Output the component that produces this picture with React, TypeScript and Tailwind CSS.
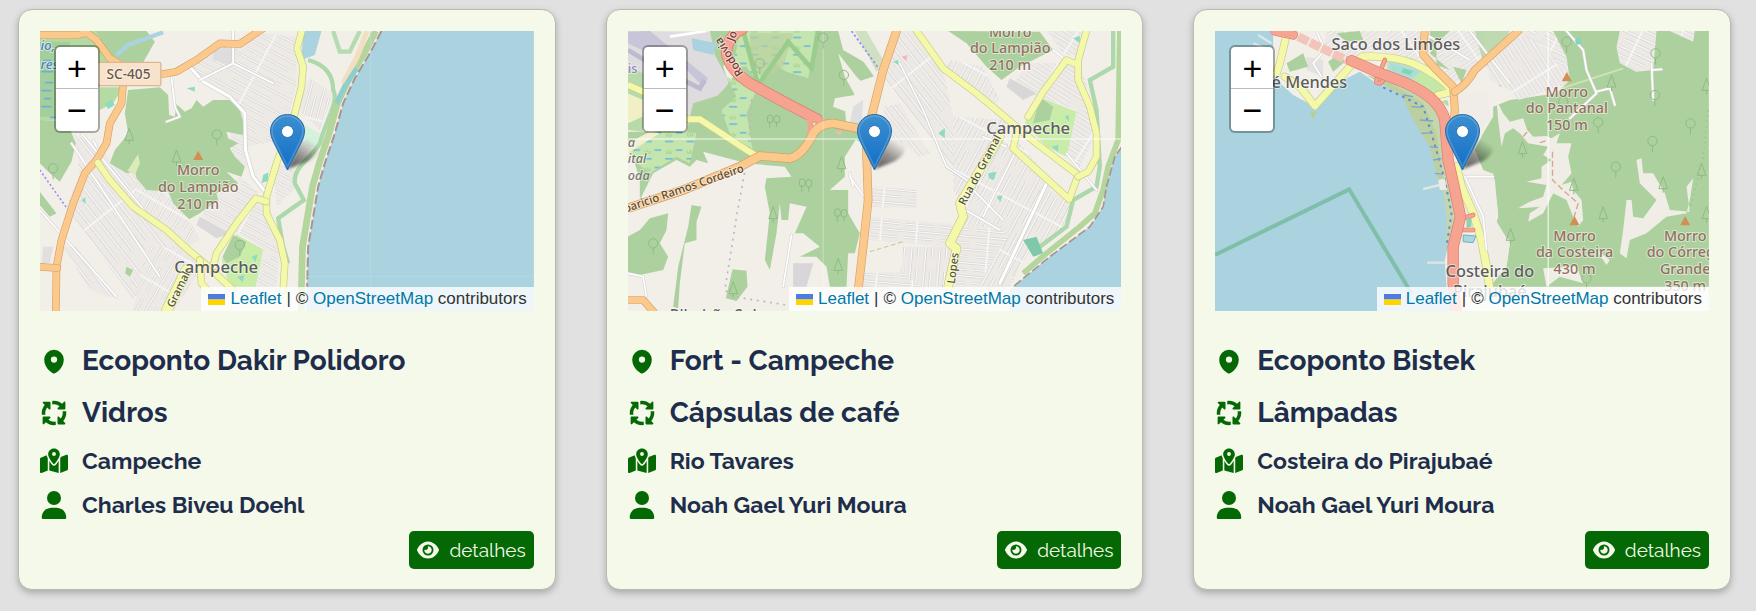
import type { ReactNode } from "react";
import { FaArrowsSpin, FaEye, FaMapLocationDot, FaUser } from "react-icons/fa6";
import { HiMiniMapPin } from "react-icons/hi2";

const LAND = "#f2efe9";
const SEA = "#aad3df";
const FOREST = "#add19e";
const PARK = "#c9eda9";

const ROADS = {
  primary: { fill: "#fcc98d", edge: "#d9a265", width: 19 },
  secondary: { fill: "#f4f9a9", edge: "#c9ca86", width: 18 },
  trunk: { fill: "#f6a392", edge: "#dd7c6c", width: 26 },
  street: { fill: "#ffffff", edge: "#d0cfcd", width: 9 },
  lane: { fill: "#ffffff", edge: "#d8d6d4", width: 5 },
};

function Road({ kind, d, width }: { kind: keyof typeof ROADS; d: string; width?: number }) {
  const road = ROADS[kind];
  const w = width ?? road.width;
  return (
    <g fill="none" strokeLinejoin="round" strokeLinecap="round">
      <path d={d} stroke={road.edge} strokeWidth={w + 4} />
      <path d={d} stroke={road.fill} strokeWidth={w} />
    </g>
  );
}

function Streets({ id, angle, gap = 17, block = 62 }: { id: string; angle: number; gap?: number; block?: number }) {
  const b = block * 2;
  const g = gap * 2;
  return (
    <pattern id={id} width={b} height={g} patternUnits="userSpaceOnUse" patternTransform={`rotate(${angle})`}>
      <rect width={b} height={g} fill="#edeae6" />
      <path d={`M0 ${gap / 2}H${b}M0 ${gap * 1.5}H${b * 0.8}`} stroke="#d3d1d0" strokeWidth="9" />
      <path d={`M0 ${gap / 2}H${b}M0 ${gap * 1.5}H${b * 0.8}M${b / 3} 0V${g}`} stroke="#fbfafa" strokeWidth="4" />
    </pattern>
  );
}

function Marsh({ id }: { id: string }) {
  return (
    <pattern id={id} width="64" height="52" patternUnits="userSpaceOnUse">
      <rect width="64" height="52" fill="#c4e6ae" />
      <path d="M4 8h24M36 34h20" stroke="#74b9dc" strokeWidth="5" />
      <path d="M10 46l-4-9M15 46v-13M20 46l4-9" stroke="#9fce8e" strokeWidth="3" />
    </pattern>
  );
}

function Label({ x, y, size = 44, color = "#5d5d5d", rotate = 0, anchor = "middle", lines, gap = 50, weight = 500 }: {
  x: number; y: number; size?: number; color?: string; rotate?: number;
  anchor?: "start" | "middle" | "end"; lines: string[]; gap?: number; weight?: number;
}) {
  return (
    <text
      fontFamily='"Noto Sans", sans-serif' fontSize={size} fontWeight={weight} fill={color} textAnchor={anchor}
      stroke="#ffffff" strokeOpacity="0.5" strokeWidth="6" paintOrder="stroke" strokeLinejoin="round"
      transform={`translate(${x} ${y}) rotate(${rotate})`}
    >
      {lines.map((line, i) => (
        <tspan key={line} x="0" y={i * gap}>{line}</tspan>
      ))}
    </text>
  );
}

function Peak({ x, y, lines }: { x: number; y: number; lines: string[] }) {
  return (
    <g>
      <path d={`M${x} ${y - 14}l15 28h-30z`} fill="#d08f55" />
      <Label x={x} y={y + 60} size={43} color="#93705f" lines={lines} />
    </g>
  );
}

function Trees({ points }: { points: [number, number][] }) {
  return (
    <g fill="none" stroke="#8fbb83" strokeWidth="3">
      {points.map(([x, y], i) =>
        i % 2 ? (
          <path key={x + "-" + y} d={`M${x} ${y - 20}l-13 36h26zM${x} ${y + 16}v12`} />
        ) : (
          <path key={x + "-" + y} d={`M${x} ${y + 28}v-18M${x - 14} ${y - 5}a14 14 0 1 0 28 0a14 14 0 1 0-28 0`} />
        ),
      )}
    </g>
  );
}

function MapSvg({ viewBox, title, children }: { viewBox: string; title: string; children: ReactNode }) {
  return (
    <svg viewBox={viewBox} preserveAspectRatio="xMidYMid slice" role="img" aria-label={title} className="block h-full w-full">
      {children}
    </svg>
  );
}

function MapDakir() {
  return (
    <MapSvg viewBox="120 93 1482 840" title="Ecoponto Dakir Polidoro">
      <defs>
        <Streets id="a1" angle={52} gap={27} block={150} />
        <Streets id="a2" angle={-60} gap={26} block={54} />
        <Streets id="a3" angle={28} gap={26} block={90} />
        <Streets id="a4" angle={-75} gap={20} block={76} />
        <Marsh id="am" />
      </defs>
      <rect x="120" y="93" width="1482" height="840" fill={LAND} />
      <path d="M225 400L420 540L560 740L480 770L400 900L200 620L240 520Z" fill="url(#a1)" />
      <path d="M440 740L560 745L610 800L520 933H400Z" fill="url(#a2)" />
      <path d="M190 740L230 740L350 890L320 890L270 870Z" fill="url(#a1)" />
      <path d="M130 740L160 740L150 790L125 790Z" fill="#e2e0de" />
      <path d="M410 530L520 600L570 658L600 720L560 745L400 620Z" fill="url(#a2)" />
      <path d="M560 190L640 130L800 100L890 110L890 250L850 420L740 440L735 340L640 260Z" fill="url(#a3)" />
      <path d="M690 395L740 400L740 500L700 480Z" fill="url(#a3)" />
      <path d="M640 580L720 530L800 600L740 640L690 700L600 660Z" fill="url(#a3)" />
      <path d="M720 640L790 610L800 660L840 740L830 860L770 860L790 745L700 690Z" fill="url(#a3)" />
      <path d="M820 480L890 520L880 570L830 620Z" fill="url(#a3)" />
      <path d="M890 320L930 235L1000 280L960 390Z" fill="url(#a4)" />
      <path d="M600 650L690 700L650 715L590 675Z" fill="#dad8d8" />
      <path d="M640 145L710 145L690 195L640 180Z" fill="#dedcdc" />
      <path d="M120 360L200 362L228 430L215 485L180 545L150 520L120 490Z" fill={FOREST} />
      <path d="M285 93H440L465 125L420 205L370 240L340 180Z" fill={FOREST} />
      <path d="M300 262H370L340 310L300 330Z" fill="#b5dba2" />
      <path d="M120 93H290L330 170V190H290V340L165 360H120Z" fill="#b4d9a2" />
      <path d="M120 125H210V350H120Z" fill="#a4cf9a" />
      <path d="M125 215h35M135 248h25M125 272h30M132 296h22M125 320h30M150 352h20M130 182h25" stroke="#6bb0dd" strokeWidth="5" />
      <path d="M350 165L385 135L490 97" fill="none" stroke={SEA} strokeWidth="13" />
      <path d="M120 575L170 640L150 650L120 615Z" fill={FOREST} />
      <path d="M385 270L480 262L505 285L508 345L525 350L530 312L555 335L575 325L590 300L610 320L640 300L690 300L720 330L735 380L728 405L680 395L685 415L715 430L690 445L705 470L735 500L725 530L680 515L715 550L650 580L655 600L600 640L568 658L520 610L505 575L440 570L410 535L405 515L380 520L330 490L345 450L370 420L385 400L375 340Z" fill={FOREST} />
      <path d="M415 462L420 490L405 525L383 512Z" fill="#dcebb9" />
      <path d="M708 703L790 748L768 860H690L665 780Z" fill={PARK} />
      <path d="M700 705L740 725L720 770L680 790L668 770Z" fill={FOREST} />
      <path d="M315 310l20-10 10 15-20 12zM560 265l25-5v15zM790 525l15-8v25l-20 8zM755 770l18-6-6 22zM712 830l22-5-6 22zM245 600l12-8v20z" fill="#8edcc0" />
      <path d="M380 800l20 10-10 20-14-10z" fill={FOREST} />
      <path d="M910 93H965L945 165L905 180Z" fill={SEA} />
      <path d="M905 370L960 400L950 440L920 440Z" fill="#d6f1dd" />
      <path d="M925 180C980 195 1000 230 1000 270C1020 300 975 370 960 430C930 480 880 500 885 550L912 600L835 655L850 740L865 790" fill="none" stroke="#add8ac" strokeWidth="13" />
      <path d="M1000 93L1020 155L1050 155L1080 93" fill="none" stroke="#b4dcb1" strokeWidth="13" />
      <path d="M1145 93L1110 160L1065 235L1030 310L1005 400L975 490L955 560L940 650L925 740L922 860L918 933H1602V93Z" fill={SEA} />
      <path d="M1128 93L1093 160L1048 235L1013 310L988 400L958 490L938 560L923 650L908 740L905 860V933" fill="none" stroke="#b4d69c" strokeWidth="20" />
      <path d="M1102 93L1072 170L1030 250" fill="none" stroke="#f2dec0" strokeWidth="16" />
      <path d="M1010 310L1035 260L1070 205" fill="none" stroke="#8fcfcb" strokeWidth="15" />
      <path d="M1145 93L1110 160L1065 235L1030 310L1005 400L975 490L955 560L940 650L925 740L922 860" fill="none" stroke="#a9948f" strokeWidth="6" strokeDasharray="28 10" />
      <path d="M1112 93V860M918 830H1602" stroke="#b9dbe3" strokeWidth="2" />
      <path d="M120 510L205 630" stroke="#9292ee" strokeWidth="5" strokeDasharray="6 7" fill="none" />
      <Road kind="lane" d="M515 232L525 320L540 350L500 365" />
      <Road kind="lane" d="M120 630L350 890M215 430L480 830M245 400L440 640M280 420L290 440" />
      <Road kind="street" d="M570 200L610 245L690 290L735 340L737 450L760 530L800 580" />
      <Road kind="street" d="M600 240L700 190L820 250M700 190V93" width={6} />
      <Road kind="primary" d="M110 105H235L260 98L290 120L330 175L365 195L370 250L365 310L330 370L320 430L290 480L255 520L220 610L185 720L170 800L168 940" />
      <Road kind="primary" d="M110 800L172 804" />
      <Road kind="primary" d="M485 223L530 215L590 180L660 130L720 132L790 85" />
      <Road kind="secondary" d="M294 488L330 540L400 620L500 690L560 745L620 795L700 870" />
      <Road kind="secondary" d="M908 85L892 145L910 200L905 260L885 340L830 490L800 590L800 640L840 720L855 790L850 870" />
      <Road kind="secondary" d="M800 605L768 595L710 670L650 760L640 800M600 780L605 850L640 890" />
      <Road kind="secondary" d="M560 810L500 933" width={30} />
      <rect x="290" y="187" width="193" height="70" rx="4" fill="#f8e2cc" stroke="#dcb793" strokeWidth="4" />
      <Label x={386} y={237} size={41} color="#6b5747" lines={["SC-405"]} />
      <g fontStyle="italic">
        <Label x={122} y={150} size={40} color="#4a83bd" lines={["io,", "res"]} gap={58} anchor="start" />
      </g>
      <Trees points={[[651, 408], [530, 470], [160, 510], [388, 405], [720, 740]]} />
      <Peak x={595} y={466} lines={["Morro", "do Lampião", "210 m"]} />
      <Label x={649} y={820} size={50} lines={["Campeche"]} />
      <Label x={520} y={925} size={33} rotate={-64} anchor="start" color="#55553a" lines={["Gramal"]} />
    </MapSvg>
  );
}

function MapFort() {
  return (
    <MapSvg viewBox="84 93 1482 840" title="Fort - Campeche">
      <defs>
        <Streets id="b1" angle={52} gap={27} block={160} />
        <Streets id="b2" angle={-62} gap={25} block={74} />
        <Streets id="b3" angle={5} gap={20} block={54} />
        <Streets id="b4" angle={32} gap={24} block={100} />
        <Streets id="b5" angle={95} gap={21} block={90} />
        <Marsh id="bm" />
      </defs>
      <rect x="84" y="93" width="1482" height="840" fill={LAND} />
      <path d="M900 93H950L1030 210L1060 350L1100 500L1060 500L840 220Z" fill="url(#b1)" />
      <path d="M850 320L900 310L990 460L960 470L860 400Z" fill="url(#b1)" />
      <path d="M1060 350L1220 360L1190 480L1090 620L1060 570Z" fill="url(#b2)" />
      <path d="M1190 420L1260 430L1360 550L1230 780L1080 680Z" fill="url(#b2)" />
      <path d="M1050 180L1150 200L1200 300L1170 320L1030 210Z" fill="url(#b2)" />
      <path d="M1290 190L1380 190L1430 180L1460 250L1480 420L1440 500L1400 460L1430 330L1230 260Z" fill="url(#b4)" />
      <path d="M1340 93H1450L1430 170L1390 160Z" fill="url(#b4)" />
      <path d="M1230 235L1310 280L1270 300L1220 260Z" fill="#d8d6d6" />
      <path d="M800 560L950 570V625L800 620Z" fill="url(#b3)" />
      <path d="M810 650L1160 680L1300 720L1230 860H1050L1060 740L810 720Z" fill="url(#b3)" />
      <path d="M910 740L1060 740L1045 933H960L900 860Z" fill="url(#b5)" />
      <path d="M790 820L910 815L960 860V933H780Z" fill="url(#b3)" />
      <path d="M1320 560L1420 600L1390 700L1300 740L1220 860L1130 860Z" fill="url(#b2)" />
      <path d="M1070 860H1230L1160 933H1040Z" fill="url(#b4)" />
      <path d="M84 93L330 95L400 280L250 360L84 250Z" fill="#dedcdf" />
      <path d="M330 93H420L370 200L400 290L330 310L390 250L345 165Z" fill={FOREST} />
      <path d="M84 200L130 220V395L84 390Z" fill="#b7daa8" />
      <path d="M84 280L130 300L128 350L84 370Z" fill="#f1efc6" />
      <path d="M84 95L150 93L325 235L305 255L260 210L84 130Z" fill="#c9c5d8" />
      <path d="M84 150L150 190L300 265L315 240" fill="none" stroke="#bebad0" strokeWidth="14" />
      <path d="M275 115L350 130L340 165L280 150Z" fill={SEA} />
      <path d="M210 110L320 93" stroke="#fff" strokeWidth="8" />
      <path d="M380 93H715L730 150L850 220L760 250L765 300L735 320L740 380L780 400L735 470L735 530L690 570L745 570L745 640L780 700L765 760L745 760L740 860H690L680 800L650 770L600 770L660 740L610 700L585 700L620 620L570 610L565 660L545 660L540 610L530 700L510 810L495 780L510 640L495 560L500 535L575 530L555 500L440 490L310 455L325 490L290 480L270 500L230 480L160 520L120 600V540L84 420V395H260L280 310L360 285L400 230Z" fill={FOREST} />
      <path d="M420 93H650L625 235L560 215L520 190L475 250L440 200L400 200Z" fill="url(#bm)" />
      <path d="M450 100H580L550 200L490 240L450 180Z" fill="#b9ce9f" opacity="0.7" />
      <path d="M430 93L475 255L565 125L635 205L655 93" fill="none" stroke="#99cc8d" strokeWidth="14" />
      <path d="M380 230L470 270L440 340L460 460L400 430L365 330L410 290Z" fill="url(#bm)" />
      <path d="M84 450L180 390L290 400L270 490L230 470L150 520L100 480Z" fill="url(#bm)" />
      <path d="M84 430L150 395L180 400L84 460Z" fill="#f2efd0" />
      <path d="M275 615L305 620L290 665L290 720L255 730L240 850L235 925L220 920L235 800L265 680Z" fill={FOREST} />
      <path d="M84 710L120 690L150 655L205 640L200 690L180 730L205 770L190 810L120 825L84 820Z" fill={FOREST} />
      <path d="M398 808L440 812L443 860L410 903L378 895Z" fill={FOREST} />
      <path d="M715 160L770 230L830 290L800 320L780 350L700 320L705 295L765 285L735 230Z" fill={LAND} />
      <path d="M725 93H900L840 220L830 240Z" fill={LAND} />
      <path d="M765 93H800L850 180L830 215Z" fill={FOREST} opacity="0.5" />
      <path d="M760 320L790 300L785 370L750 370Z" fill="#dcdedf" />
      <path d="M580 790H640L620 860H580Z" fill="#d8d6d8" />
      <path d="M1045 93L1320 95L1360 150L1260 200L1205 240L1160 200L1100 130Z" fill={FOREST} />
      <path d="M1320 292L1430 335L1400 470L1340 440L1275 370L1290 330Z" fill={PARK} />
      <path d="M1320 292L1360 320L1350 360L1300 370Z" fill={FOREST} />
      <path d="M1015 400l20-15v30zM1165 520l25-5-8 25-15-5zM1190 590l18-5-6 22zM1355 440l20-5v20zM1420 115l20-8v22zM1395 350l12-5v20zM765 415l12-10v20zM880 185l15-6v16z" fill="#8edcc0" />
      <path d="M705 395l20-3-3 15zM905 170l18-5-4 18z" fill="#f7b5b5" />
      <path d="M1540 93V200L1470 240L1490 330L1500 500L1490 560L1420 600L1400 680L1320 740" fill="none" stroke="#add8ac" strokeWidth="13" />
      <path d="M1270 720L1310 710L1330 760L1300 770Z" fill="#7fc9a8" />
      <path d="M1566 440L1545 470L1520 560L1510 620L1470 680L1350 770L1230 870V933H1566Z" fill={SEA} />
      <path d="M1560 93L1555 420L1525 500L1510 570L1485 640L1440 680L1340 760L1270 820" fill="none" stroke="#b4d69c" strokeWidth="17" />
      <path d="M1566 440L1545 470L1520 560L1510 620L1470 680L1350 770L1240 860" fill="none" stroke="#a9948f" strokeWidth="5" strokeDasharray="26 9" />
      <path d="M755 93L840 210" stroke="#8d8def" strokeWidth="5" strokeDasharray="7 7" fill="none" />
      <path d="M455 300L445 460L410 650L375 870L400 890L560 915" stroke="#bfb5bd" strokeWidth="5" strokeDasharray="6 14" fill="none" />
      <path d="M810 755L910 725" stroke="#dccba0" strokeWidth="4" strokeDasharray="14 8" fill="none" />
      <Road kind="lane" d="M575 705L550 860M750 530L800 600M760 560L750 520M84 820L130 830L140 890M1360 150L1410 190M1400 460L1490 570" />
      <Road kind="lane" d="M1110 560L1210 660M1080 620L1200 690M1150 410L1220 440M1250 450L1150 650" />
      <Road kind="street" d="M1345 540L1200 850" />
      <Road kind="street" d="M900 190L970 330L1040 500L1130 560" width={5} />
      <path d="M84 255L130 275L260 358L300 358L440 450L470 468" fill="none" stroke="#c9ca86" strokeWidth="22" />
      <path d="M84 255L130 275L260 358L300 358L440 450L470 468" fill="none" stroke="#f4f9a9" strokeWidth="18" />
      <path d="M84 625L250 570L420 500L480 468L570 475Q610 465 640 400Q660 370 700 370L790 388" fill="none" stroke="#d9a265" strokeWidth="28" />
      <Road kind="trunk" d="M430 85Q380 110 380 160Q390 210 450 250L560 310L652 358" width={30} />
      <path d="M600 335Q632 355 622 400L640 400Q655 372 668 360L640 340Z" fill="#f6a392" />
      <path d="M84 625L250 570L420 500L480 468L570 475Q610 465 640 400Q660 370 700 370L790 388" fill="none" stroke="#fcc98d" strokeWidth="23" />
      <path d="M636 365l16 3-12 12z" fill="#f2e6c4" stroke="#dd9a6c" strokeWidth="3" />
      <Road kind="primary" d="M893 85L850 210L815 350L800 450L805 600L790 740L775 870" width={22} />
      <Road kind="primary" d="M74 900L130 900L165 940" />
      <Road kind="secondary" d="M945 85L1030 205L1130 280L1220 355L1310 430L1435 525L1408 598L1240 445L1250 400" />
      <Road kind="secondary" d="M1462 85L1435 180L1435 240L1470 320L1490 400V470L1465 515L1435 530M1435 195L1400 180L1330 275L1285 350" />
      <Road kind="secondary" d="M1200 410L1080 610L1090 650L1050 730L1070 745L1045 860" width={24} />
      <path d="M84 417H1566" stroke="#ffffff" strokeWidth="3" opacity="0.85" />
      <path d="M670 93V870" stroke="#ffffff" strokeWidth="3" opacity="0.35" />
      <Trees points={[[480, 195], [400, 865], [732, 230], [725, 490], [160, 735], [520, 640], [670, 118], [715, 795]]} />
      <g fill="none" stroke="#8fbb83" strokeWidth="3">
        <path d="M510 385v-20M502 357a9 12 0 1 0 18 0a9 12 0 1 0-18 0M530 380v-15M522 358a9 12 0 1 0 18 0a9 12 0 1 0-18 0" />
        <path d="M606 575v-20M598 548a9 12 0 1 0 18 0a9 12 0 1 0-18 0M627 575v-15M618 550a9 12 0 1 0 18 0a9 12 0 1 0-18 0" />
        <path d="M712 665v-20M704 638a9 12 0 1 0 18 0a9 12 0 1 0-18 0M733 665v-15M724 640a9 12 0 1 0 18 0a9 12 0 1 0-18 0" />
      </g>
      <Label x={1231} y={110} size={43} color="#93705f" lines={["Morro", "do Lampião", "210 m"]} />
      <Label x={1285} y={402} size={50} lines={["Campeche"]} />
      <Label x={76} y={638} size={34} rotate={-19} anchor="start" color="#5c4b33" lines={["paricio Ramos Cordeiro"]} />
      <Label x={432} y={220} size={34} rotate={-122} anchor="start" color="#6b3b35" lines={["Rodovia"]} />
      <Label x={402} y={126} size={34} rotate={-70} anchor="start" color="#6b3b35" lines={["Jo"]} />
      <Label x={1095} y={618} size={33} rotate={-62} anchor="start" color="#55553a" lines={["Rua do Gramal"]} />
      <Label x={1065} y={852} size={33} rotate={-83} anchor="start" color="#55553a" lines={["Lopes"]} />
      <Label x={84} y={218} size={38} color="#9285bd" anchor="start" lines={["is"]} />
      <g fontStyle="italic">
        <Label x={84} y={440} size={38} color="#77776c" anchor="start" lines={["a", "ital", "oda"]} />
      </g>
      <Label x={340} y={962} size={46} lines={["Ribeirão Sul"]} />
    </MapSvg>
  );
}

function MapBistek() {
  return (
    <MapSvg viewBox="75 93 1482 840" title="Ecoponto Bistek">
      <defs>
        <Streets id="c1" angle={58} gap={24} block={70} />
        <Streets id="c2" angle={-35} gap={24} block={70} />
        <Streets id="c3" angle={25} gap={24} block={56} />
      </defs>
      <rect x="75" y="93" width="1482" height="840" fill={SEA} />
      <path d="M250 93H1557V933H790L770 860L765 780L790 680L775 590L755 540L745 450L735 400L720 340L640 280L560 250L510 215L440 250L375 320L310 285L250 230Z" fill={LAND} />
      <path d="M530 225L640 290L690 370L735 400L740 440L755 540L770 650L770 750L785 700L800 640L785 560L765 430L745 330L640 250Z" fill="#c4d6ae" />
      <path d="M500 215L530 225L640 290L665 350L695 400L720 440L745 540L760 540L740 400L700 310L600 250Z" fill="#bccfa0" />
      <path d="M580 262L700 320L725 400L745 470L765 540L785 640L770 740" fill="none" stroke="#5f8ed0" strokeWidth="6" strokeDasharray="8 13" />
      <path d="M640 285l30 5M665 320l30 2M690 360l40 3M695 400l35-2M720 440l25 3M730 480l25-4M735 520l25 3" stroke="#7ba5cf" strokeWidth="4" />
      <path d="M410 93H700L720 160L700 190L560 150L470 175L400 150Z" fill="url(#c2)" />
      <path d="M720 93H890L860 200L800 250L720 180Z" fill="url(#c2)" />
      <path d="M940 120L1080 93L1140 150L1140 250L990 300L960 230L880 200Z" fill="url(#c1)" />
      <path d="M980 93H1100L1140 160L1110 210L1080 150Z" fill="url(#c3)" />
      <path d="M350 170L400 180L400 230L350 210Z" fill="#e4e2df" />
      <path d="M290 190L340 160L355 200L300 215ZM415 185L450 160L465 185L430 215ZM440 100L510 93L520 120L470 125ZM720 93L780 93L720 150ZM790 200L830 210L815 250ZM740 130L720 160L780 210L740 195Z" fill={FOREST} />
      <path d="M590 180L690 205L765 260L750 300L650 235L590 215Z" fill="#c3e8a8" />
      <path d="M600 187L690 212L665 238L600 212Z" fill="#a9dfd0" stroke="#b9d8ea" strokeWidth="5" />
      <path d="M640 205l30 8-10 12-25-8z" fill="#7fd6b4" />
      <path d="M1090 93H1557V860H900L945 790L960 720L910 700L925 650L915 540L905 520L880 510L855 450L880 400L910 350L910 320L960 300L1100 280L1140 240L1130 170Z" fill={FOREST} />
      <path d="M855 93H960L930 150L880 190ZM890 190L940 160L990 250L930 260Z" fill={FOREST} opacity="0.75" />
      <path d="M890 160L960 140L1020 290L985 300L960 270L900 240Z" fill="url(#c1)" />
      <path d="M800 280H890L905 350L870 385L810 330Z" fill="#f0ede8" />
      <path d="M1290 93H1400L1390 210L1340 215L1290 190L1280 140Z" fill="url(#c3)" />
      <path d="M1440 93L1510 125L1515 93Z" fill="url(#c3)" />
      <path d="M820 520H910L925 640L905 680L960 730L950 800L900 860H790L800 700Z" fill="#f0ede8" />
      <path d="M905 640L960 730L950 800L900 850L895 720Z" fill="#efece5" />
      <path d="M920 300L940 340L960 365L1000 355L1012 390L1030 410L1070 408L1085 415L1110 400L1100 430L1145 430L1135 470L1145 520L1115 555L1145 545L1150 570L1175 600L1180 660L1165 680L1150 650L1130 600L1090 580L1060 640L1015 665L1020 640L1050 620L985 625L1020 605L1060 590L1070 555L1010 545L1055 535L1055 500L1085 480L1060 465L1075 440L1015 430L990 400L970 385L945 400L935 440L925 360Z" fill="#f0ede6" />
      <path d="M1340 480L1355 475L1360 520L1390 520L1425 580L1440 630L1500 635L1490 560L1510 535L1500 600L1490 640L1430 650L1370 700L1320 720L1310 775L1290 760L1300 690L1310 600L1325 600L1330 650L1360 655L1400 600L1350 550Z" fill="#f0ede6" />
      <path d="M1060 805L1160 800L1180 850L1110 830L1070 860ZM1220 750L1260 780L1250 795Z" fill="#f0ede6" />
      <path d="M1088 455V540L1130 580L1165 610L1150 660M1000 410L1020 385M1050 428L1075 420" fill="none" stroke="#dba28c" strokeWidth="4" strokeDasharray="18 9" />
      <path d="M1115 265L1300 205" stroke="#cfe3b4" strokeWidth="5" />
      <path d="M1555 330L1540 470L1500 630" fill="none" stroke="#9cbb91" strokeWidth="4" strokeDasharray="4 12" />
      <Road kind="lane" d="M1130 93L1180 150L1190 210L1220 280L1140 355M1220 275L1260 265L1275 315M1385 190L1390 300M1385 210L1415 208" />
      <Road kind="lane" d="M380 93L405 150L370 190L395 230M690 93L840 180M840 93L960 250M830 530H910" />
      <path d="M700 567L750 555M712 788H765M190 130L240 150M205 105L245 130" stroke="#dfe5e4" strokeWidth="7" />
      <path d="M745 540L765 535L770 570L750 570Z" fill="#eceae6" />
      <path d="M75 765L478 568L665 880" fill="none" stroke="#7fbfaa" strokeWidth="12" />
      <path d="M290 93L480 185" stroke="#f3c4b9" strokeWidth="26" strokeDasharray="34 5" />
      <Road kind="secondary" d="M290 105L270 190L260 220" width={20} />
      <Road kind="secondary" d="M285 230L330 260L375 318L480 200L515 170Q600 165 670 190Q750 225 790 275L745 285" width={20} />
      <Road kind="primary" d="M705 85L700 165L740 210L790 260L795 330L790 380" width={20} />
      <Road kind="primary" d="M795 275Q830 255 855 210L985 93" width={20} />
      <Road kind="secondary" d="M800 500L815 560L850 640L875 720L890 800L900 870" width={22} />
      <Road kind="lane" d="M825 530L880 650L890 750" />
      <Road kind="trunk" d="M585 180L565 230Q550 255 575 248L590 225M820 655L850 645M815 690H850" width={10} />
      <Road kind="trunk" d="M485 182L560 215L650 250Q750 295 765 360L775 480L795 570L812 650L790 740L790 850L800 940" width={30} />
      <Road kind="trunk" d="M255 93L310 105" width={24} />
      <path d="M755 305Q780 290 775 320Z" fill="#b8dd9f" />
      <path d="M830 660l15-8v28l-15 4z" fill="#8fd3ab" />
      <path d="M820 705L858 708L850 728L820 725Z" fill="#a8d9dd" stroke="#73aebc" strokeWidth="3" />
      <path d="M360 335l20 0-10 22zM340 300l25 25" fill="#b4cf9c" />
      <path d="M1075 93V870" stroke="#ffffff" strokeWidth="3" />
      <Trees points={[[1397, 165], [1265, 245], [1225, 372], [1152, 555], [1502, 375], [998, 445], [1388, 428], [1240, 640], [1278, 505], [1420, 550], [1395, 290], [1535, 510], [1190, 840], [962, 705], [1130, 130], [1550, 255], [1120, 310], [1550, 640]]} />
      <path d="M1155 120l15-8 5 18-15 5z" fill="#7fd6c0" />
      <Label x={618} y={150} size={49} lines={["Saco dos Limões"]} />
      <Label x={472} y={263} size={49} anchor="end" lines={["José Mendes"]} />
      <Peak x={1131} y={230} lines={["Morro", "do Pantanal", "150 m"]} />
      <Peak x={1154} y={662} lines={["Morro", "da Costeira", "430 m"]} />
      <Peak x={1486} y={662} lines={["Morro", "do Córrego", "Grande", "350 m"]} />
      <Label x={900} y={832} size={49} gap={60} lines={["Costeira do", "Pirajubaé"]} />
    </MapSvg>
  );
}

function Marker() {
  return (
    <svg viewBox="0 0 64 58" aria-hidden="true" className="pointer-events-none absolute bottom-1/2 left-1/2 -ml-[17px] h-[58px] w-16">
      <defs>
        <linearGradient id="pin" x1="0" y1="0" x2="0" y2="1">
          <stop offset="0" stopColor="#3c8fd0" />
          <stop offset="1" stopColor="#126fc6" />
        </linearGradient>
        <linearGradient id="shade" x1="0" y1="1" x2="0.7" y2="0">
          <stop offset="0" stopColor="#000" stopOpacity="0.65" />
          <stop offset="0.5" stopColor="#000" stopOpacity="0.4" />
          <stop offset="1" stopColor="#000" stopOpacity="0" />
        </linearGradient>
        <filter id="soft" x="-40%" y="-40%" width="180%" height="180%">
          <feGaussianBlur stdDeviation="1.5" />
        </filter>
      </defs>
      <path d="M18 56L30 28Q44 24 48 32Q50 42 36 49Z" fill="url(#shade)" filter="url(#soft)" />
      <path d="M17.500 1.500C8 1.500 0.500 9 0.500 18C0.500 23 2.500 27 4.500 31L17.500 57L30.500 31C32.500 27 34.500 23 34.500 18C34.500 9 27 1.500 17.500 1.500Z" fill="url(#pin)" stroke="#2b6ea5" strokeWidth="1" />
      <path d="M17.500 3C9 3 2 10 2 18C2 22.500 4 26.500 6 30.500L17.500 53.500L29 30.500C31 26.500 33 22.500 33 18C33 10 26 3 17.500 3Z" fill="none" stroke="#fff" strokeOpacity="0.18" strokeWidth="1.500" />
      <circle cx="17.500" cy="18.500" r="6" fill="#fff" stroke="#2a75b5" strokeWidth="1" />
    </svg>
  );
}

function MapBox({ children }: { children: ReactNode }) {
  return (
    <div className="relative h-[280px] overflow-hidden bg-[#dddddd] font-['Liberation_Sans',Arial,sans-serif]">
      {children}
      <Marker />
      <div className="absolute top-3.5 left-3.5 flex flex-col overflow-hidden rounded-md border-2 border-black/30 bg-white bg-clip-padding">
        <button type="button" aria-label="Zoom in" className="flex h-[42px] w-[42px] items-center justify-center border-b border-[#bbbbbb] text-[34px] leading-none text-black">+</button>
        <button type="button" aria-label="Zoom out" className="flex h-[42px] w-[42px] items-center justify-center text-[34px] leading-none text-black">−</button>
      </div>
      <div className="absolute right-0 bottom-0 flex h-6 items-center gap-[5px] bg-white/80 px-[7px] text-[17px] leading-6 whitespace-nowrap text-[#333333]">
        <a href="#leaflet" className="flex items-center gap-[5px] text-[#0078a8]">
          <svg viewBox="0 0 12 8" preserveAspectRatio="none" aria-hidden="true" className="h-[11px] w-[17px]">
            <path fill="#4c7be1" d="M0 0h12v4H0z" />
            <path fill="#ffd500" d="M0 4h12v4H0z" />
          </svg>
          Leaflet
        </a>
        <span>|</span>
        <span>© <a href="#osm" className="text-[#0078a8]">OpenStreetMap</a> contributors</span>
      </div>
    </div>
  );
}

interface Point {
  name: string;
  material: string;
  district: string;
  owner: string;
  map: ReactNode;
}

const points: Point[] = [
  { name: "Ecoponto Dakir Polidoro", material: "Vidros", district: "Campeche", owner: "Charles Biveu Doehl", map: <MapDakir /> },
  { name: "Fort - Campeche", material: "Cápsulas de café", district: "Rio Tavares", owner: "Noah Gael Yuri Moura", map: <MapFort /> },
  { name: "Ecoponto Bistek", material: "Lâmpadas", district: "Costeira do Pirajubaé", owner: "Noah Gael Yuri Moura", map: <MapBistek /> },
];

function Card({ point }: { point: Point }) {
  return (
    <article className="flex flex-col rounded-[14px] border border-[#b8bbae] bg-[#f4f9e9] p-[21px] pb-5 shadow-[0_3px_7px_rgba(0,0,0,0.25)]">
      <MapBox>{point.map}</MapBox>
      <div className="mt-8 flex flex-col gap-4 font-bold text-[#1f2d4d]">
        <h2 className="flex h-9 items-center gap-3.5 text-[28px] leading-9">
          <HiMiniMapPin className="size-7 shrink-0 text-[#046804]" />
          {point.name}
        </h2>
        <h3 className="flex h-9 items-center gap-3.5 text-[28px] leading-9">
          <FaArrowsSpin className="size-7 shrink-0 text-[#046804]" />
          {point.material}
        </h3>
        <p className="flex h-7 items-center gap-3.5 text-[23px] leading-7">
          <FaMapLocationDot className="size-7 shrink-0 text-[#046804]" />
          {point.district}
        </p>
        <p className="flex h-7 items-center gap-3.5 text-[23px] leading-7">
          <FaUser className="size-7 shrink-0 text-[#046804]" />
          {point.owner}
        </p>
      </div>
      <button type="button" className="mt-3 flex h-[38px] items-center gap-2.5 self-end rounded-[5px] bg-[#046804] px-2 text-[19px] text-[#f4f9e9]">
        <FaEye className="size-[22px]" />
        detalhes
      </button>
    </article>
  );
}

export default function App() {
  return (
    <main className="min-h-screen bg-[#e1e1e1] pt-[9px] pr-[25px] pl-[18px] font-[Raleway,Lato,sans-serif]">
      <div className="grid grid-cols-3 items-start gap-[50px]">
        {points.map((point) => (
          <Card key={point.name} point={point} />
        ))}
      </div>
    </main>
  );
}
